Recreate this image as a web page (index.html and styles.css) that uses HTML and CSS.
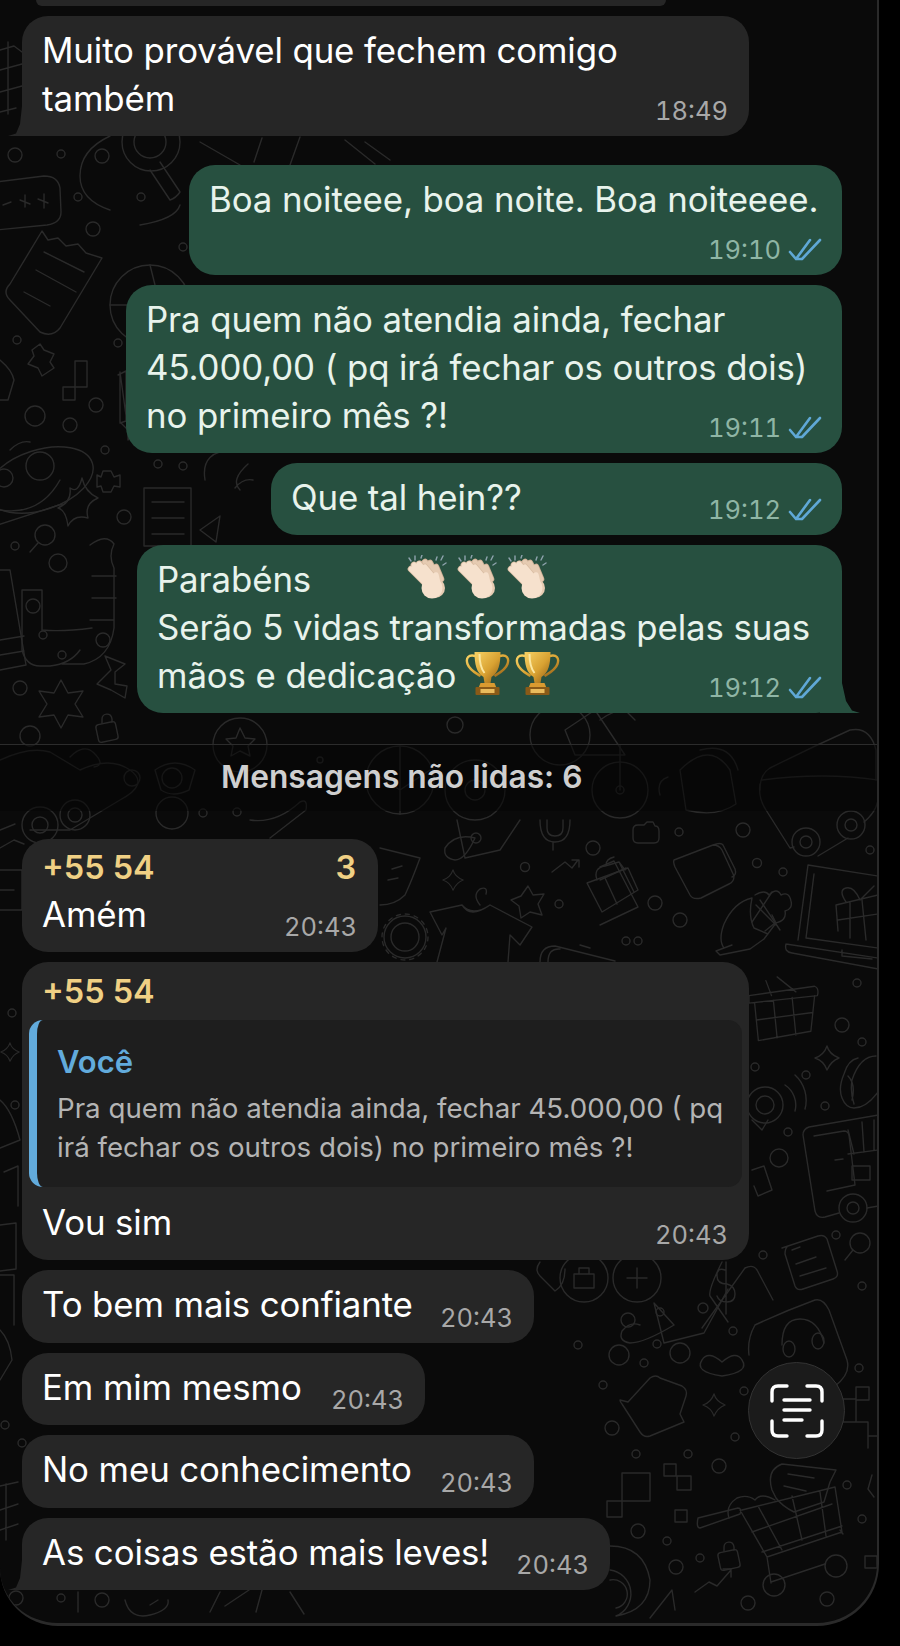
FILE: index.html
```html
<!DOCTYPE html>
<html lang="pt-BR">
<head>
<meta charset="utf-8">
<title>Conversa</title>
<link rel="stylesheet" href="styles.css">
</head>
<body>
<svg class="defs" width="0" height="0" aria-hidden="true">
  <defs>
    <linearGradient id="gold" x1="0" y1="0" x2="1" y2="1">
      <stop offset="0" stop-color="#f8d264"/><stop offset=".55" stop-color="#d9a232"/><stop offset="1" stop-color="#8f5a14"/>
    </linearGradient>
    <symbol id="ticks" viewBox="0 0 34 24"><path d="M2 14 8 21 22 2M14 21 32 2M8 21h6" fill="none" stroke="#5fa8d6" stroke-width="2.6" stroke-linecap="round" stroke-linejoin="round"/></symbol>
    <symbol id="clap" viewBox="0 0 42 44">
      <g fill="none" stroke-linecap="round">
        <path d="M27 28 14 9M30 26 19 7M32 24 24 8M35 24 30 12" stroke="#c9ac92" stroke-width="6.6"/>
        <path d="M27 28 14 9M30 26 19 7M32 24 24 8M35 24 30 12" stroke="#e6cbb2" stroke-width="5"/>
      </g>
      <ellipse cx="29" cy="33" rx="10" ry="10" fill="#e6cbb2"/>
      <g fill="none" stroke-linecap="round">
        <path d="M21 30 5 14M23 26 8 10M26 24 13 9M29 24 19 12" stroke="#d9bda3" stroke-width="6.6"/>
        <path d="M21 30 5 14M23 26 8 10M26 24 13 9M29 24 19 12" stroke="#f6e1cd" stroke-width="5"/>
        <path d="M33 34 30 20" stroke="#f6e1cd" stroke-width="5.5"/>
      </g>
      <ellipse cx="26" cy="33" rx="10.5" ry="10.5" fill="#f6e1cd"/>
      <path d="M9 1v4M16 0l-1 3M3 3l2 3M31 2l-1 3M37 1l-2 4M40 8l-3 2" stroke="#8fa3ad" stroke-width="1.4" stroke-linecap="round"/>
    </symbol>
    <symbol id="trophy" viewBox="0 0 44 44">
      <path d="M10 5C3 3 0 7 2 13c2 6 8 9 13 12M34 5c7-2 10 2 8 8-2 6-8 9-13 12" fill="none" stroke="url(#gold)" stroke-width="2.4"/>
      <path d="M9 1h26c0 12-2 21-9 25l-1 6h-6l-1-6C11 22 9 13 9 1Z" fill="url(#gold)"/>
      <path d="M14 3c0 8 1 14 5 19" fill="none" stroke="#fbe7a1" stroke-width="2"/>
      <path d="M15 32h14l2 5H13Z" fill="#d99a30"/>
      <rect x="10" y="36" width="24" height="8" rx="1" fill="#8a5a18"/><rect x="15" y="38" width="14" height="4" fill="#e9bb5d"/>
    </symbol>
    <symbol id="basket" viewBox="0 0 80 80" overflow="visible"><path d="M0 22 70 12q5 2 3 10L0 30ZM6 30 10 70 66 60 70 22M26 27l4 40M46 24l4 40M8 48 68 40M24 22 18 6M50 18 30 2"/></symbol>
    <symbol id="star4" viewBox="0 0 26 26" overflow="visible"><path d="M13 1q2 8 12 12-8 3-12 12-3-9-12-12 9-3 12-12Z"/></symbol>
    <symbol id="lock" viewBox="0 0 24 30" overflow="visible"><rect x="2" y="11" width="20" height="18" rx="3" transform="rotate(-12 12 20)"/><path d="M7 11V7c0-6 9-7 10 0v3"/></symbol>
  </defs>
</svg>
<main class="frame">
  <svg class="doodles" viewBox="0 0 878 1625" aria-hidden="true">
    <g class="dg">
      <!-- cart at the very top left -->
      <path d="M0 50 14 46l8 6M0 70l22-6M0 92l22-6M0 112l16-4M8 42v72"/>
      <!-- top left area -->
      <circle cx="15" cy="155" r="7"/><circle cx="61" cy="154" r="4"/><circle cx="102" cy="156" r="7"/><circle cx="78" cy="197" r="4"/><circle cx="141" cy="197" r="4"/><circle cx="93" cy="229" r="7"/><circle cx="183" cy="247" r="4"/>
      <path d="M-4 182 44 176q14 0 16 12l1 24q0 11-14 13L-4 230M3 205l8-3M20 200l10 4M25 195l0 12M38 199l10 4M44 194l0 14"/>
      <path d="M42 231 48 240l10-2 8 8 12-2 8 9 16 5-42 70q-8 10-20 4L10 300q-8-8 0-16ZM44 252 84 272M36 270 76 292M24 292 50 306"/>
      <circle cx="151" cy="142" r="29"/><circle cx="150" cy="142" r="16"/>
      <path d="M150 170 170 200q6-2 10-8L160 162M110 136q-30 14-30 40 0 24 30 34 M180 205q-4 14-40 20"/>
      <circle cx="150" cy="305" r="40"/><path d="M150 265 160 305M110 305h50"/>
      <path d="M200 142 240 165M262 138l-8 24M300 137l-10 28M345 140l30 24M365 142 390 160"/>
      <!-- left column -->
      <circle cx="17" cy="340" r="4"/><circle cx="118" cy="343" r="4"/><circle cx="35" cy="416" r="10"/><circle cx="70" cy="425" r="7"/><circle cx="96" cy="405" r="7"/><circle cx="105" cy="450" r="4"/>
      <path d="M32 350l8-6 4 6 10 4-4 8 4 6-12 8-4-8-10-4 6-8ZM75 361h12v26H75v13H63v-13h12ZM0 360q12 10 14 20L8 400H0"/>
      <path d="M120 372l0 50 8 8 0 10q5-5 0-10ZM118 375l8-4v50l-6 2"/>
      <ellipse cx="40" cy="480" rx="55" ry="30" transform="rotate(-18 40 480)"/><circle cx="40" cy="466" r="14"/><circle cx="4" cy="478" r="9"/>
      <path d="M0 510q40 6 60-30M10 450q10-10 20-8M-2 525 62 504M82 478q3 14 16 20-14 6-10 20-14-4-20 8-2-16-10-18 14-6 12-20 8 6 12-10Z"/>
      <path d="M103 471h8l3 6 6-2v12l-6-1-3 6h-8l-2-6-4 1v-12l4 2Z"/>
      <circle cx="124" cy="517" r="7"/><circle cx="158" cy="464" r="4"/><circle cx="183" cy="466" r="4"/>
      <rect x="144" y="488" width="47" height="58"/><path d="M152 502h32M152 518h32M152 534h32M200 530l20-14-4 26ZM205 480q-5-30 30-30h40M240 490q-10-10 8-26M235 488q8-10 18-8"/>
      <circle cx="45" cy="535" r="10"/><path d="M38 543 30 552"/>
      <circle cx="15" cy="546" r="4"/>
      <circle cx="58" cy="563" r="9"/><path d="M80 650q-10 14-30 16H40q-14 0-18-16V590h20v40q20 2 50-2M114 544q-6 12 0 24v60q-4 30-30 36H62M90 545q16-12 24-1M92 576h24M92 598h24M90 620h24"/>
      <path d="M0 570 10 570 26 665 0 670M0 640l24-4M0 655l24-4"/>
      <circle cx="33" cy="606" r="7"/><circle cx="43" cy="635" r="4"/><circle cx="62" cy="655" r="4"/><circle cx="103" cy="640" r="7"/><circle cx="20" cy="688" r="7"/><circle cx="30" cy="736" r="10"/>
      <path d="M61 680l7 13 15-2-8 13 8 13-15-2-7 13-7-13-15 2 8-13-8-13 15 2ZM125 664l-10 8 0 12 12 2-2 12-14-8-14-6 14-14-6-14Z"/>
      <use href="#lock" x="95" y="712" width="24" height="30"/>
      <!-- unread band -->
      <path d="M0 760q30-14 50-8l30 18q30-14 50 0 20 14-10 30l-50 30-40 0M70 757q14-14 24-4 12 12 0 14"/>
      <circle cx="75" cy="815" r="15"/><circle cx="75" cy="815" r="7"/><circle cx="40" cy="825" r="18"/><circle cx="40" cy="825" r="8"/>
      <circle cx="132" cy="778" r="8"/><circle cx="172" cy="778" r="10"/><circle cx="172" cy="813" r="16"/><path d="M155 770q20-14 40 0l-6 20q-16 8-28 0Z"/>
      <circle cx="237" cy="812" r="4"/><circle cx="203" cy="813" r="4"/><path d="M250 820q26 4 50-18 8-4 6 8L270 838"/>
      <circle cx="240" cy="745" r="27"/><path d="M240 728l5 10 10 1-7 7 2 10-10-5-9 5 2-10-7-7 10-1Z"/>
      <circle cx="400" cy="780" r="34"/><path d="M370 770l30 20 30-20M400 746v68"/><circle cx="320" cy="760" r="3"/>
      <circle cx="455" cy="725" r="8"/><circle cx="475" cy="790" r="30"/><circle cx="475" cy="790" r="10"/>
      <circle cx="560" cy="735" r="30"/><path d="M565 730l30-20 30 45-50 0ZM600 720q20-14 30-10M625 710l10 10"/>
      <circle cx="620" cy="790" r="28"/><circle cx="620" cy="790" r="4"/><path d="M620 745v45"/>
      <path d="M680 770q30-30 50 0l6 34q-20 14-50 6ZM700 750q30-8 38 20M660 795q-4-14 8-18"/>
      <path d="M760 790q0-16 10-22 40-20 80-38 20-4 26 20v30"/>
      <!-- between b6 and b7 -->
      <path d="M380 848 420 858q-8 22-15 37-10 10-25 10M402 866l-10 3M398 878l-10 2"/>
      <path d="M457 820l8 38 35-8 20-30"/>
      <path d="M475 838q-20-5-30 10-2 10 10 12 10 0 20-22"/><circle cx="476" cy="838" r="5"/>
      <use href="#star4" x="442" y="868" width="22" height="24"/>
      <circle cx="405" cy="937" r="14"/><circle cx="405" cy="937" r="21"/><circle cx="405" cy="937" r="23" stroke-dasharray="4 5"/>
      <path d="M430 912l32-7q10 12 28 0l42 22-12 18-10-10-2 27M430 912l12 23 4-7-9 34M462 905q8 14 28 0M480 905q-8-10 0-16 8-3 6 5"/>
      <path d="M528 886l5 9 11-1-6 10 4 11-12-3-9 6-2-12-8-6 10-4Z"/>
      <circle cx="525" cy="867" r="4.5"/><circle cx="559" cy="904" r="4"/><circle cx="593" cy="848" r="7"/><circle cx="655" cy="903" r="7"/><circle cx="626" cy="941" r="4"/>
      <path d="M540 820q0 22 15 22 15 0 15-22M553 842v8M547 820v8q0 8 8 8 8 0 8-8v-8"/>
      <path d="M552 872l13-10 7 6 6-8M572 860h7v7"/>
      <path d="M587 883 628 868l10 22-36 22ZM602 912 587 883M605 878l12 26M597 880q-4-12 8-14l14-4 6 8"/>
      <path d="M540 962q0-16 15-16l60 15M548 962q0-14 12-13M580 945l10 3"/>
      <!-- right column -->
      <path d="M760 784q-2 14 6 26l24 38 4-1M818 856 848 838M864 822q12-10 14-22M762 780q30-4 60-4 30 0 56 4"/>
      <circle cx="806" cy="842" r="14"/><circle cx="806" cy="842" r="6"/><circle cx="851" cy="825" r="14"/><circle cx="851" cy="825" r="6"/>
      <path d="M633 830q0-5 5-5h6l3-3h6l2 4q4 0 4 5v7q0 5-5 5h-16q-5 0-5-5Z"/>
      <path d="M674 860l39-15q6 0 9 5l12 26q0 6-5 8l-28 14q-8 2-11-3l-15-28q-2-5-1-7ZM713 845q8-3 10 0l12 24q2 6-3 8"/>
      <path d="M600 867l14-6 24 46-38 18M620 864l14 28M600 880l26-12M606 865q0-6 8-8"/>
      <circle cx="743" cy="830" r="7"/><circle cx="679" cy="832" r="4"/><circle cx="680" cy="920" r="7"/><circle cx="638" cy="941" r="4"/><circle cx="757" cy="863" r="4.5"/><circle cx="783" cy="872" r="4"/><circle cx="870" cy="850" r="4"/>
      <path d="M732 945l-16 6 4 4 30-6 14-10 12-16-4-8M752 898q-18 4-28 26-6 16 0 24M752 898q-4 18 2 30l14 6M756 905l20 20"/>
      <path d="M755 895q10-6 14 0 8-8 12 0 8-4 10 6 2 8-6 10 2 10-10 12l-10 8"/>
      <path d="M760 900l20 30M772 892l-20 30"/>
      <path d="M808 865 798 940M808 865 878 876M814 874 806 938 878 948M786 944 878 958M786 944q-2 8 6 9l86 16M842 950l0 6 30 3"/>
      <path d="M836 905 878 895M836 905l2 26M850 902v36M862 900l4 40M838 920l40-6M846 902q-8-12 0-14 8-2 14 12 8-8 14-14"/>
      <use href="#basket" x="749" y="975" width="75" height="75"/>
      <circle cx="857" cy="983" r="4"/><circle cx="842" cy="1025" r="7"/><circle cx="862" cy="1042" r="4"/><circle cx="806" cy="1075" r="4"/><circle cx="755" cy="1067" r="4"/>
      <use href="#star4" x="814" y="1045" width="26" height="26"/>
      <path d="M858 1058q-10 2-14 16-6 14-2 24 4 10 12 10 12 0 24-16M876 1056q-16 0-24 24-2 12 2 24M848 1076q8 8 4 24"/>
      <circle cx="765" cy="1105" r="18"/><circle cx="765" cy="1105" r="9"/><path d="M785 1085a24 24 0 0 1 10 26M795 1075a34 34 0 0 1 10 34M752 1120l10 10 6-10"/>
      <circle cx="825" cy="1106" r="4"/><circle cx="788" cy="1132" r="4"/><circle cx="779" cy="1158" r="9"/>
      <path d="M803 1135q0-6 6-8l69-12M803 1135l12 76q2 8 10 6l14-4M867 1208l11-2M814 1136l30-5q4 0 5 4l6 50-28 6"/>
      <path d="M848 1130l6 24M862 1122l2 30M874 1120v30M848 1154l30-4M852 1166h18v14h-18Z"/>
      <circle cx="853" cy="1208" r="14"/><circle cx="853" cy="1208" r="6"/><path d="M835 1160l8-1"/>
      <path d="M752 1170l12-4 8 24-14 6-4-10"/>
      <circle cx="836" cy="1235" r="4"/><circle cx="763" cy="1255" r="4"/><circle cx="862" cy="1286" r="4"/>
      <path d="M782 1248 818 1236q6-2 9 3l10 32q2 6-4 8l-30 10q-6 2-8-3l-10-32q0-6 3-8ZM792 1250l8-3M796 1264l20-7M800 1276l26-8"/>
      <circle cx="860" cy="1243" r="10"/><path d="M853 1250l-8 10"/>
      <!-- bubble-side row -->
      <circle cx="584" cy="1278" r="24"/><path d="M574 1274h20v14h-20ZM579 1274v-6h10v6"/><circle cx="637" cy="1278" r="24"/><path d="M627 1278h20M637 1268v20"/>
      <path d="M540 1262q-6 8 0 14l15 15q10-6 10-22"/>
      <path d="M702 1328 745 1268q8-4 12 2l16 30M722 1262q-14 28-12 34l18 26M725 1270q-8-3-8 6 0 8 10 8 8 2 8 10 0 8-8 8-8 0-10-6M726 1262v52"/>
      <circle cx="660" cy="1312" r="4"/><circle cx="628" cy="1320" r="7"/><circle cx="578" cy="1345" r="4"/>
      <path d="M640 1325q-10-4-18 6-4 10 8 12 14 0 44-18M674 1325l-20-22 10 40 40-10 24-44"/>
      <circle cx="703" cy="1308" r="5"/>
      <!-- lower right -->
      <path d="M755 1325q30-14 60-25 8-2 14 10l18 50q4 14-12 26l-20 14M755 1325q-8 14-6 30M782 1345q0-26 18-26 18 0 24 24"/>
      <ellipse cx="789" cy="1349" rx="6" ry="8"/><ellipse cx="818" cy="1341" rx="6" ry="8"/>
      <path d="M722 1362q-14-12-20-2-8 12 20 16M722 1362q14-12 20-2 8 12-20 16"/>
      <path d="M628 1402 650 1378q6-4 10 0l22 8q6 4 4 10l-6 18 4 8-34 14q-6 2-10-4l-18-28q-2-2-2-4Z"/>
      <use href="#star4" x="702" y="1392" width="24" height="26"/>
      <circle cx="619" cy="1355" r="10"/><circle cx="644" cy="1363" r="4"/><circle cx="657" cy="1344" r="4"/><circle cx="680" cy="1353" r="10"/><circle cx="733" cy="1331" r="4"/><circle cx="744" cy="1391" r="4"/><circle cx="603" cy="1385" r="4"/><circle cx="612" cy="1428" r="7"/><circle cx="735" cy="1437" r="4"/><circle cx="636" cy="1454" r="4"/><circle cx="688" cy="1454" r="4"/><circle cx="719" cy="1466" r="7"/>
      <circle cx="859" cy="1368" r="4"/><circle cx="847" cy="1485" r="4"/><circle cx="862" cy="1519" r="4"/>
      <path d="M843 1399h13v-12h13v13h-13v22h-13v-1h-10M856 1422h12v14h10M868 1436v12"/>
      <path d="M872 1475l-4 14 6 8"/>
      <path d="M622 1473h28v28h-28ZM607 1501h15v16h-15ZM664 1464h12v12h-12ZM677 1476h14v14h-14Z"/>
      <rect x="675" y="1510" width="12" height="12"/>
      <circle cx="638" cy="1531" r="7"/><circle cx="667" cy="1541" r="4"/><circle cx="700" cy="1558" r="4"/><circle cx="676" cy="1567" r="7"/>
      <use href="#lock" x="717" y="1540" width="24" height="30"/>
      <path d="M695 1592l14-10 8 4 14-16M723 1569h8v8"/>
      <circle cx="748" cy="1603" r="7"/><circle cx="827" cy="1599" r="7"/>
      <rect x="865" y="1556" width="12" height="12"/>
      <path d="M610 1546q34 0 40 34 0 30-34 36M610 1570a24 24 0 0 1 6 46M610 1580a14 14 0 0 1 6 28"/>
      <path d="M650 1618 672 1590 675 1610"/>
      <!-- cart -->
      <path d="M698 1518 738 1508q4 0 2 6l-40 14q-4 0-2-10ZM740 1510 767 1557 842 1532 835 1487 742 1510M758 1506l24 44M792 1496l10 44M820 1492l6 44M752 1532l80-28M762 1552l80-26M767 1557l4 26M771 1582l54-18M840 1530l3 4"/>
      <circle cx="774" cy="1585" r="11"/><circle cx="836" cy="1566" r="11"/>
      <path d="M775 1500q-14-8-20 0-8-6-18-2-12 8-8 20M772 1490q-6-20 10-26l54 6-6 12-6 20-30 10q-12-6-18-14ZM788 1474l26 4M784 1486l22 5"/>
      <!-- bottom left -->
      <circle cx="16" cy="1598" r="7"/><circle cx="61" cy="1598" r="4"/><circle cx="102" cy="1600" r="7"/><path d="M78 1592v20M125 1600q5 20 25 15 20-5 18-15M150 1605l8-5M210 1612l10-20M225 1606l24-16M262 1590l-6 22M290 1592l14 22"/>
      <path d="M0 1486 18 1482M0 1510l18-6M0 1530l18-6M6 1484v56"/>
      <circle cx="5" cy="1425" r="4"/><circle cx="22" cy="1443" r="4"/><path d="M0 1330q10 10 12 30l-12 20M0 1275h14v50"/>
      <path d="M0 1225l16-2v46l-16 2M4 1172l14-6v40M0 1100q12 10 20 40l-20 8"/>
      <use href="#star4" x="0" y="1040" width="20" height="24"/>
      <circle cx="12" cy="1013" r="4"/><circle cx="15" cy="1105" r="4"/>
      <path d="M-2 870h24v40H0M0 890h14"/>
      <path d="M0 848l14-8 10 4M0 830l15-6"/>
    </g>
  </svg>
  <section class="chat">
    <div class="bubble in sliver"></div>
    <div class="bubble in w-long tail-left">
      <p class="text">Muito provável que fechem comigo<br>também</p>
      <span class="meta">18:49</span>
    </div>
    <div class="bubble out w-b2 tall gap-lg">
      <p class="text">Boa noiteee, boa noite. Boa noiteeee.</p>
      <span class="meta">19:10 <svg class="tick"><use href="#ticks"/></svg></span>
    </div>
    <div class="bubble out w-b3">
      <p class="text">Pra quem não atendia ainda, fechar<br>45.000,00 ( pq irá fechar os outros dois)<br>no primeiro mês ?!</p>
      <span class="meta">19:11 <svg class="tick"><use href="#ticks"/></svg></span>
    </div>
    <div class="bubble out w-b4">
      <p class="text">Que tal hein??</p>
      <span class="meta">19:12 <svg class="tick"><use href="#ticks"/></svg></span>
    </div>
    <div class="bubble out w-b5 tail-right">
      <p class="text">Parabéns<svg class="emoji clap-first"><use href="#clap"/></svg><svg class="emoji clap"><use href="#clap"/></svg><svg class="emoji clap"><use href="#clap"/></svg><br>Serão 5 vidas transformadas pelas suas<br>mãos e dedicação<svg class="emoji trophy-first"><use href="#trophy"/></svg><svg class="emoji trophy"><use href="#trophy"/></svg></p>
      <span class="meta">19:12 <svg class="tick"><use href="#ticks"/></svg></span>
    </div>
    <div class="unread">Mensagens não lidas: 6</div>
    <div class="bubble in w-b6 named">
      <div class="name"><span>+55 54</span><span>3</span></div>
      <div class="body">
        <p class="text">Amém</p>
        <span class="meta">20:43</span>
      </div>
    </div>
    <div class="bubble in w-long reply">
      <div class="name"><span>+55 54</span></div>
      <blockquote class="quote">
        <strong class="quote-author">Você</strong>
        <p class="quote-text">Pra quem não atendia ainda, fechar 45.000,00 ( pq<br>irá fechar os outros dois) no primeiro mês ?!</p>
      </blockquote>
      <div class="body">
        <p class="text">Vou sim</p>
        <span class="meta">20:43</span>
      </div>
    </div>
    <div class="bubble in w-b8 short">
      <p class="text">To bem mais confiante</p>
      <span class="meta">20:43</span>
    </div>
    <div class="bubble in w-b9 short">
      <p class="text">Em mim mesmo</p>
      <span class="meta">20:43</span>
    </div>
    <div class="bubble in w-b8 short">
      <p class="text">No meu conhecimento</p>
      <span class="meta">20:43</span>
    </div>
    <div class="bubble in w-b11 short tail-left">
      <p class="text">As coisas estão mais leves!</p>
      <span class="meta">20:43</span>
    </div>
  </section>
  <button class="scan" type="button" aria-label="Digitalizar texto">
    <svg viewBox="0 0 54 54" width="54" height="54"><path d="M2 17V8q0-6 6-6h9M37 2h9q6 0 6 6v9M2 37v9q0 6 6 6h9M37 52h9q6 0 6-6v-9M14 16h26M14 26h26M14 36h18" fill="none" stroke="#fff" stroke-width="3.4" stroke-linecap="round"/></svg>
  </button>
</main>
</body>
</html>
```

FILE: styles.css
```css
* { box-sizing: border-box; margin: 0; padding: 0; }
html, body { background: #000; }
body { width: 900px; height: 1646px; overflow: hidden; font-family: Inter, "Liberation Sans", sans-serif; }
.defs { position: absolute; }

.frame {
  position: relative;
  width: 879px;
  height: 1626px;
  background: #0a0a0a;
  border-right: 2px solid #2a2a2a;
  border-bottom: 3px solid #2a2a2a;
  border-bottom-left-radius: 58px;
  border-bottom-right-radius: 62px;
  overflow: hidden;
}
.doodles { position: absolute; left: 0; top: 0; width: 878px; height: 1625px; }
.dg { fill: none; stroke: #2a2a2a; stroke-width: 1.4; stroke-linecap: round; stroke-linejoin: round; }

.chat { position: relative; display: flex; flex-direction: column; gap: 10px; padding: 0 35px 0 22px; }

.bubble {
  position: relative;
  isolation: isolate;
  display: grid;
  padding: 10px 21px 14px 20px;
  border-radius: 26px;
  color: #fff;
  background: #262626;
}
.bubble.out { align-self: flex-end; background: #275040; color: #e8f3ec; padding-right: 20px; }
.bubble.in { align-self: flex-start; }
.sliver { height: 6px; width: 630px; margin-left: 14px; padding: 0; border-radius: 0 0 20px 20px; }

.text { grid-area: 1 / 1; font-size: 34.8px; line-height: 48px; white-space: nowrap; letter-spacing: -.1px; }
.meta {
  grid-area: 1 / 1;
  justify-self: end;
  align-self: end;
  display: flex;
  align-items: center;
  gap: 7px;
  height: 26px;
  margin-bottom: -2px;
  font-size: 25.5px;
  line-height: 26px;
  font-variant-numeric: tabular-nums;
  color: #a8a8a8;
  white-space: nowrap;
}
.out .meta { color: #8fb5a5; }
.tick { width: 34px; height: 24px; }

.w-long { width: 727px; }
.w-b2 { width: 653px; }
.w-b3 { width: 716px; }
.w-b4 { width: 571px; }
.w-b5 { width: 705px; }
.w-b6 { width: 356px; }
.w-b8 { width: 512px; }
.w-b9 { width: 403px; }
.w-b11 { width: 588px; }

.gap-lg { margin-top: 19px; }
.tall { height: 110px; }
.short { height: 72.5px; }

.tail-left::after, .tail-right::after {
  content: "";
  position: absolute;
  z-index: -1;
  bottom: 0;
  width: 40px;
  height: 30px;
  background: #262626;
}
.tail-right::after { background: #275040; }
.tail-left::after { left: -14px; clip-path: polygon(100% 0, 100% 100%, 0 100%, 20% 92%, 30% 60%, 35% 0); }
.tail-right::after { right: -18px; clip-path: polygon(0 0, 0 100%, 100% 100%, 80% 92%, 65% 60%, 55% 0); }

.emoji { display: inline-block; vertical-align: top; }
.clap-first { width: 44px; height: 44px; margin-left: 94px; }
.clap { width: 44px; height: 44px; margin-left: 6px; }
.trophy-first { width: 45px; height: 44px; margin-left: 9px; }
.trophy { width: 45px; height: 44px; margin-left: 5px; }

.unread {
  margin-top: 21px;
  margin-bottom: 18px;
  height: 67px;
  margin-left: -22px;
  margin-right: -35px;
  padding-left: 221px;
  border-top: 1px solid #2c2c2c;
  font-size: 31.7px;
  font-weight: 600;
  line-height: 64px;
  color: #cfcfcf;
  background: rgba(6, 6, 6, .55);
}

.named, .reply { padding: 0; }
.name {
  display: flex;
  justify-content: space-between;
  padding: 7px 22px 0 20px;
  height: 53px;
  font-size: 32.4px;
  line-height: 44px;
  font-weight: 600;
  color: #f0d084;
}
.reply .name { padding-top: 8px; height: 50px; }
.body { display: grid; padding: 0 21px 14px 20px; }
.named .body { margin-top: -2px; }

.quote {
  margin: 8px 7px 0;
  height: 167px;
  border-left: 8px solid #62abdc;
  border-radius: 14px;
  padding: 14px 10px 0 20px;
  background: #1e1e1e;
}
.quote-author { display: block; font-size: 31px; line-height: 55px; font-weight: 600; color: #62abdc; }
.quote-text { font-size: 27.7px; line-height: 38.5px; color: #b4b4b4; white-space: nowrap; }
.reply .body { padding-top: 11px; }

.scan {
  position: absolute;
  left: 748px;
  top: 1362px;
  width: 97px;
  height: 97px;
  display: flex;
  align-items: center;
  justify-content: center;
  border: 1.5px solid #333;
  border-radius: 50%;
  background: #1b1b1b;
}
```
